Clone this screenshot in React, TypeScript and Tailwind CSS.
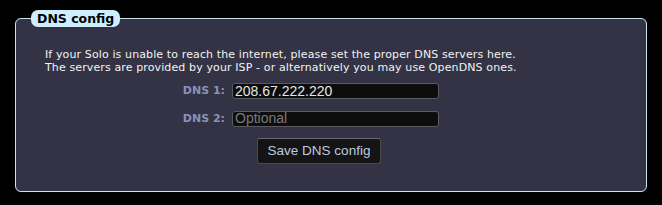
import React from 'react';

export default function App() {
  return (
    <div className="w-[662px] h-[205px] bg-black px-[15px] pt-[10px] font-['DejaVu_Sans',sans-serif]">
      <fieldset className="border border-[#c4e2f2] rounded-[6px] bg-[#333345] h-[182px] px-[29px]">
        <legend className="-ml-[14px] px-[6px] h-[17px] leading-[17px] rounded-[7px] bg-[#cdeefd] text-black text-[12.5px] font-bold">
          DNS config
        </legend>

        <p className="mt-[21px] text-[11px] leading-[13px] tracking-[0.12px] text-[#f2f2f2]">
          If your Solo is unable to reach the internet, please set the proper DNS servers here.<br />
          The servers are provided by your ISP - or alternatively you may use OpenDNS ones.
        </p>

        <div className="mt-[9px] flex flex-col gap-[11px] font-['Liberation_Sans',Arial,sans-serif]">
          <div className="flex items-center gap-[7px]">
            <label className="w-[180px] text-right text-[11px] font-bold text-[#8b90bd] font-['DejaVu_Sans',sans-serif]">DNS 1:</label>
            <input
              defaultValue="208.67.222.220"
              className="w-[207px] h-[16px] px-[2px] bg-[#0d0d0d] border border-[#5a5a62] rounded-[3px] text-[14px] text-[#e6e6e6] outline-none"
            />
          </div>
          <div className="flex items-center gap-[7px]">
            <label className="w-[180px] text-right text-[11px] font-bold text-[#8b90bd] font-['DejaVu_Sans',sans-serif]">DNS 2:</label>
            <input
              placeholder="Optional"
              className="w-[207px] h-[16px] px-[2px] bg-[#0d0d0d] border border-[#5a5a62] rounded-[3px] text-[14px] text-[#e6e6e6] placeholder:text-[#7a7a7a] outline-none"
            />
          </div>
        </div>

        <div className="mt-[11px] pl-[212px]">
          <button className="w-[124px] h-[26px] bg-[#141414] border border-[#4a4a4a] border-t-[#6a6a70] rounded-[3px] text-[13.5px] text-[#bccbe0] font-['Liberation_Sans',Arial,sans-serif]">
            Save DNS config
          </button>
        </div>
      </fieldset>
    </div>
  );
}
